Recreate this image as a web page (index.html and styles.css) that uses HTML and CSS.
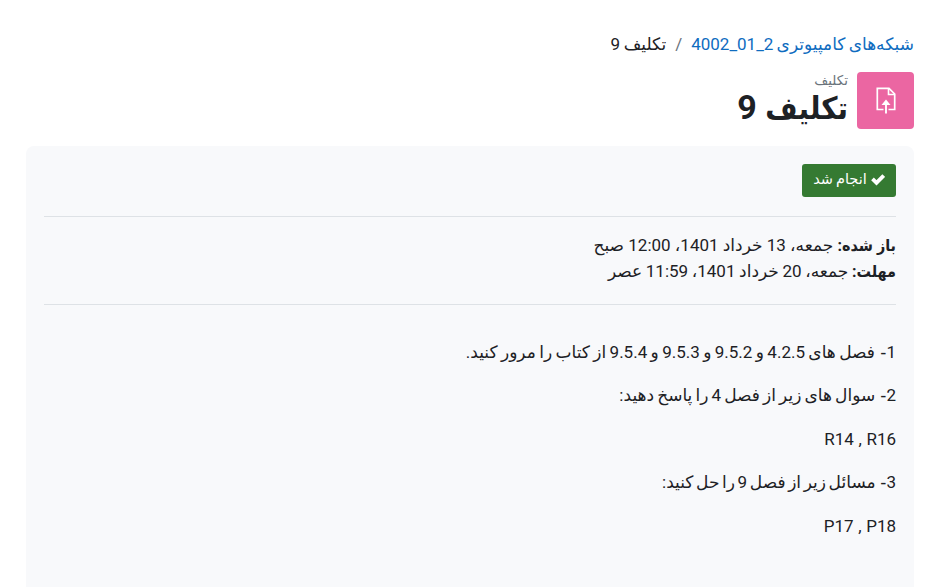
FILE: index.html
```html
<!DOCTYPE html>
<html lang="fa" dir="rtl">
<head>
<meta charset="utf-8">
<title>تکلیف 9</title>
<link rel="stylesheet" href="styles.css">
</head>
<body>
<nav class="breadcrumb"><a href="#">شبکه‌های کامپیوتری 2_01_4002</a><span class="sep">/</span><span>تکلیف 9</span></nav>
<header class="page-header">
  <div class="activity-icon">
    <svg width="20" height="28" viewBox="0 0 20 28" fill="none" stroke="#fff" stroke-width="1.700"><path d="M7.500 22.500H1.300V1.300H13L18.700 7v15.500h-6.200"/><path d="M12.500 1.500v6h6" stroke-width="1.600"/><path d="M10 26.500V16" stroke-width="1.900"/><path d="M10 12.500l4.500 5.500h-9z" fill="#fff" stroke="none"/></svg>
  </div>
  <div class="heading"><div class="kind">تکلیف</div><h1><span class="word">تکلیف</span> 9</h1></div>
</header>
<main class="card">
  <div class="completion"><span class="done"><svg width="14" height="12" viewBox="0 0 14 12"><path d="M1.500 4.800l4 4L12.700 1.500" fill="none" stroke="#fff" stroke-width="3.800"/></svg><span>انجام شد</span></span></div>
  <div class="dates"><div><b>باز شده:</b> جمعه، 13 خرداد 1401، 12:00 صبح</div><div class="due"><b>مهلت:</b> جمعه، 20 خرداد 1401، 11:59 عصر</div></div>
  <div class="intro">
    <p class="review">1<span class="dash">-</span> فصل های 4.2.5 و 9.5.2 و 9.5.3 و 9.5.4 از کتاب را مرور کنید.</p>
    <p>2<span class="dash">-</span> سوال های زیر از فصل 4 را پاسخ دهید:</p>
    <p class="codes"><bdi>R14 , R16</bdi></p>
    <p class="problems">3<span class="dash">-</span> مسائل زیر از فصل 9 را حل کنید:</p>
    <p class="codes"><bdi>P17 , P18</bdi></p>
  </div>
</main>
</body>
</html>
```
FILE: styles.css
```css
* { box-sizing: border-box; }
body { margin: 0; height: 587px; overflow: hidden; padding: 31px 26px 0; background: #fff; color: #1d2125; font: 17px/26px Roboto, "DejaVu Sans", sans-serif; word-spacing: -0.6px; }
.breadcrumb { height: 26px; display: flex; gap: 9px; }
.breadcrumb a { color: #0f6cbf; text-decoration: none; word-spacing: -1px; }
.sep { color: #6a737b; }
.page-header { display: flex; gap: 9px; margin-top: 15px; height: 57px; }
.activity-icon { width: 57px; height: 57px; border-radius: 4px; background: #eb66a2; display: grid; place-items: center; }
.kind { font-size: 13.500px; line-height: 17px; color: #6a737b; }
h1 { margin: 0; font: 700 34px/37px Roboto, "DejaVu Sans Condensed", "DejaVu Sans", sans-serif; word-spacing: 0; }
.word { font-size: 31px; }
b { font-family: Roboto, "DejaVu Sans Condensed", "DejaVu Sans", sans-serif; font-size: 16px; }
.card { margin-top: 17px; height: 460px; background: #f8f9fb; border-radius: 8px; padding: 18px; }
.completion { height: 53px; border-bottom: 1px solid #dee2e6; }
.done { display: inline-flex; align-items: center; justify-content: center; gap: 4px; width: 94px; height: 33px; padding-bottom: 2px; border-radius: 3px; background: #357a32; color: #fff; font-size: 14.500px; }
.dates { height: 88px; padding-top: 15px; border-bottom: 1px solid #dee2e6; word-spacing: 0; }
.dates div { height: 26px; }
.due { word-spacing: -0.6px; }
.intro { padding-top: 34px; }
.dash { font-family: "DejaVu Sans", sans-serif; margin-left: 2px; }
p { height: 26px; margin: 0 0 17.400px; word-spacing: -1.100px; }
.review { word-spacing: -0.850px; }
.problems { word-spacing: -1.600px; }
.codes { word-spacing: 0.4px; }
```
